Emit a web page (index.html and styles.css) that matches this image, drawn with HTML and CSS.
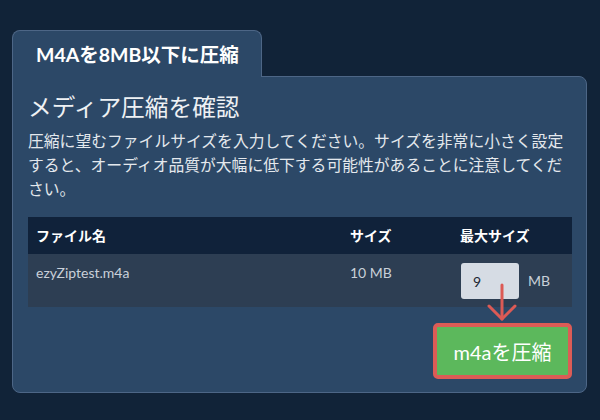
FILE: index.html
```html
<!DOCTYPE html>
<html lang="ja">
<head>
<meta charset="utf-8">
<title>M4Aを8MB以下に圧縮</title>
<link rel="stylesheet" href="styles.css">
</head>
<body>
<div class="page">
  <div class="tab">M4Aを8MB以下に圧縮</div>
  <div class="panel">
    <h2 class="title">メディア圧縮を確認</h2>
    <p class="desc">圧縮に望むファイルサイズを入力してください。サイズを非常に小さく設定すると、オーディオ品質が大幅に低下する可能性があることに注意してください。</p>
    <table class="files">
      <thead>
        <tr>
          <th class="c-name">ファイル名</th>
          <th class="c-size">サイズ</th>
          <th class="c-max">最大サイズ</th>
        </tr>
      </thead>
      <tbody>
        <tr>
          <td>ezyZiptest.m4a</td>
          <td>10 MB</td>
          <td>
            <div class="max-wrap">
              <span class="input-box">
                <input class="max-input" type="text" value="9">
                <svg class="arrow" width="30" height="38" viewBox="0 0 30 38" aria-hidden="true">
                  <line x1="15" y1="0" x2="15" y2="34" stroke="#dc5a55" stroke-width="3" stroke-linecap="round"/>
                  <polyline points="2,21 15,34 28,21" fill="none" stroke="#dc5a55" stroke-width="3" stroke-linecap="round" stroke-linejoin="round"/>
                </svg>
              </span>
              <span class="unit">MB</span>
            </div>
          </td>
        </tr>
      </tbody>
    </table>
    <div class="actions">
      <button class="compress" type="button">m4aを圧縮</button>
    </div>
  </div>
</div>
</body>
</html>
```

FILE: styles.css
```css
html, body {
  margin: 0;
  padding: 0;
  background: #112338;
}

body {
  font-family: "Lato", "Noto Sans CJK JP", sans-serif;
  color: #e6eaef;
}

.page {
  padding: 30px 13px 0 12px;
  width: 600px;
  box-sizing: border-box;
}

.tab {
  position: relative;
  z-index: 1;
  display: inline-block;
  margin-bottom: -1px;
  padding: 12px 22px 10px 23px;
  line-height: 24px;
  font-size: 19.5px;
  font-weight: 700;
  color: #ffffff;
  background: #2c4867;
  border: 1px solid #4d6686;
  border-bottom: 0;
  border-radius: 8px 8px 0 0;
}

.panel {
  width: 575px;
  box-sizing: border-box;
  background: #2c4867;
  border: 1px solid #4d6686;
  border-radius: 0 8px 8px 8px;
  padding: 14px 14px 13px 15px;
}

.title {
  margin: 0;
  font-size: 23.7px;
  line-height: 32px;
  font-weight: 400;
  color: #eef1f4;
}

.desc {
  margin: 6px 0 0;
  font-size: 15.8px;
  line-height: 24px;
  color: #e4e8ed;
}

.files {
  margin-top: 16px;
  width: 544px;
  border-collapse: collapse;
  table-layout: fixed;
}

.files th {
  background: #10223a;
  color: #ffffff;
  font-size: 14px;
  font-weight: 700;
  text-align: left;
  padding: 8px 8px;
  line-height: 21px;
}

.c-name { width: 298px; }
.c-size { width: 94px; }
.c-max { width: 104px; }

.files td {
  background: #2d3e53;
  color: #c9d0d9;
  font-size: 14px;
  line-height: 20px;
  padding: 9px 8px 8px;
  vertical-align: top;
}

.max-wrap {
  display: flex;
  align-items: center;
  gap: 9px;
}

.input-box {
  position: relative;
  display: block;
  width: 58px;
  height: 36px;
  margin-left: 1px;
}

.max-input {
  display: block;
  width: 58px;
  height: 36px;
  box-sizing: border-box;
  border: 0;
  border-radius: 3px;
  background: #d6dce4;
  color: #1c2733;
  font-family: "Lato", sans-serif;
  font-size: 14px;
  padding: 0 12px;
  outline: none;
}

.arrow {
  position: absolute;
  left: 26px;
  top: 22px;
  overflow: visible;
}

.unit {
  font-size: 14px;
  color: #c9d0d9;
}

.actions {
  display: flex;
  justify-content: flex-end;
  margin-top: 16px;
}

.compress {
  width: 139px;
  height: 56px;
  box-sizing: border-box;
  border: 4px solid #dc5c56;
  border-radius: 5px;
  background: #5cb85c;
  color: #ffffff;
  font-family: "Lato", "Noto Sans CJK JP", sans-serif;
  font-size: 20px;
  padding: 0;
  cursor: pointer;
}
```
